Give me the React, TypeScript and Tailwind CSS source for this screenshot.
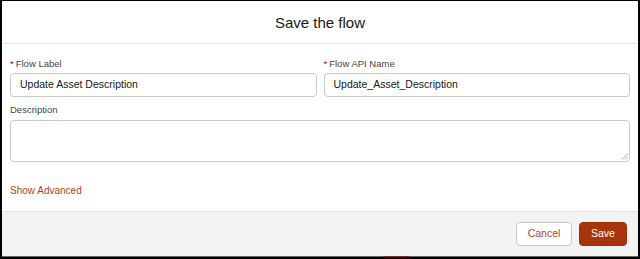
import React from "react";

export default function App() {
  const font = { fontFamily: "'Liberation Sans', Arial, sans-serif" };
  return (
    <div
      className="w-[640px] h-[259px] bg-black pl-[2px] pr-[2px] pt-[1px] pb-[2px] overflow-hidden"
      style={font}
    >
      <div className="flex h-full flex-col bg-white">
        <div className="flex h-[43px] shrink-0 items-center justify-center border-b border-[#e5e5e5]">
          <h1 className="text-[15px] leading-none text-[#181818]">Save the flow</h1>
        </div>
        <div className="flex flex-1 flex-col px-[8px] pt-[13px]">
          <div className="grid grid-cols-2 gap-x-[7px]">
            <div className="flex flex-col">
              <label className="text-[9.5px] leading-[14px] text-[#444]">
                <span className="text-[#ba0517] mr-[2px]">*</span>Flow Label
              </label>
              <div className="mt-[2px] flex h-[24px] items-center rounded-[4px] border border-[#c9c9c9] px-[9px] text-[10.5px] text-[#181818]">
                Update Asset Description
              </div>
            </div>
            <div className="flex flex-col">
              <label className="text-[9.5px] leading-[14px] text-[#444]">
                <span className="text-[#ba0517] mr-[2px]">*</span>Flow API Name
              </label>
              <div className="mt-[2px] flex h-[24px] items-center rounded-[4px] border border-[#c9c9c9] px-[9px] text-[10.5px] text-[#181818]">
                Update_Asset_Description
              </div>
            </div>
          </div>
          <label className="mt-[6px] text-[9.5px] leading-[14px] text-[#444]">Description</label>
          <div className="relative mt-[3px] h-[42px] rounded-[4px] border border-[#c9c9c9]">
            <svg
              className="absolute right-[1px] bottom-[1px]"
              width="7"
              height="7"
              viewBox="0 0 7 7"
            >
              <path d="M6.5 1 L1 6.5 M6.5 4 L4 6.5" stroke="#999" strokeWidth="0.9" />
            </svg>
          </div>
          <div className="mt-[23px] text-[10px] leading-[12px] text-[#b3441f]">Show Advanced</div>
        </div>
        <div className="flex h-[45px] shrink-0 items-center justify-end gap-[7px] border-t border-[#e3e3e3] bg-[#f3f3f3] pr-[11px]">
          <button className="h-[24px] w-[56px] rounded-[4px] border border-[#c9c9c9] bg-white text-[10.5px] text-[#b3441f]">
            Cancel
          </button>
          <button className="h-[24px] w-[48px] rounded-[4px] border border-[#a03008] bg-[#a8340b] text-[10.5px] text-white">
            Save
          </button>
        </div>
        <div className="flex h-[1px] shrink-0 bg-[#666]">
          <div className="ml-[381px] w-[27px] bg-[#8c2a1b]" />
        </div>
      </div>
    </div>
  );
}
